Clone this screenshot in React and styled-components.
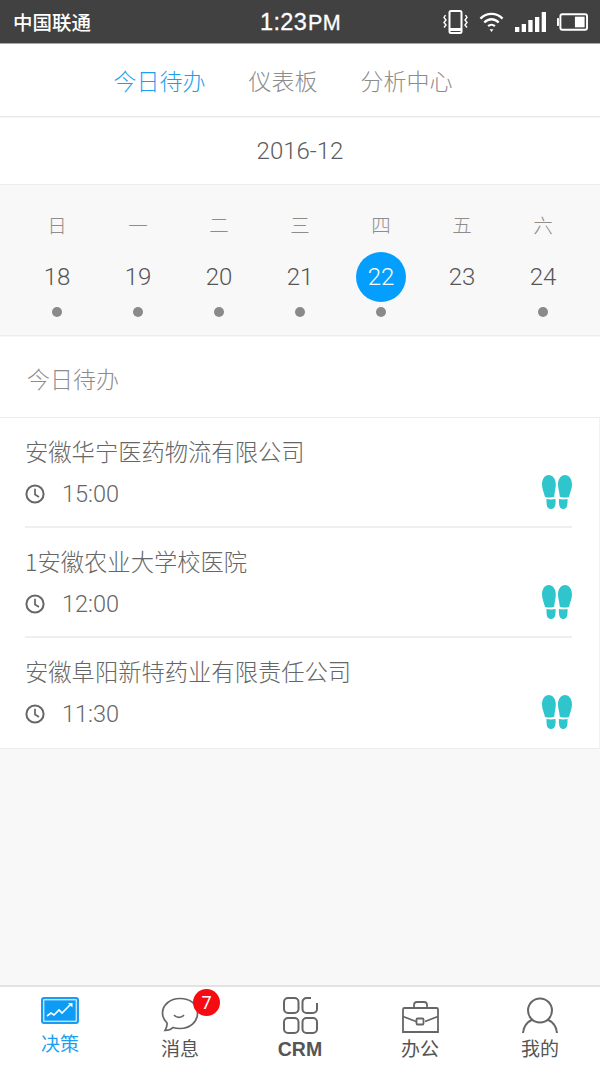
import React from "react";
import styled, { createGlobalStyle } from "styled-components";

const GlobalStyle = createGlobalStyle`
    html, body {
        margin: 0;
        padding: 0;
        background: #f8f8f8;
    }
    * {
        box-sizing: border-box;
    }
    body {
        font-family: "Roboto", "Noto Sans CJK SC", sans-serif;
    }
`;

const Page = styled.div`
    width: 600px;
    height: 1067px;
    display: flex;
    flex-direction: column;
    background: #f8f8f8;
    overflow: hidden;
`;

/* STATUS BAR */
const StatusBar = styled.div`
    height: 44px;
    flex: none;
    display: grid;
    grid-template-columns: 1fr auto 1fr;
    align-items: center;
    padding: 0 12px 0 13px;
    background: #414141;
    border-bottom: 1px solid #a8a8a8;
    color: #fff;
`;

const Carrier = styled.div`
    font-family: "Noto Sans CJK SC", sans-serif;
    font-size: 19.5px;
    font-weight: 500;
`;

const Clock = styled.div`
    font-family: "Liberation Sans", sans-serif;
    font-size: 23.5px;
    font-weight: 400;
    letter-spacing: 0.3px;
    padding-top: 2px;
    -webkit-text-stroke: 0.3px #fff;

    small {
        font-size: 21.5px;
        margin-left: 1px;
    }
`;

const StatusIcons = styled.div`
    display: flex;
    justify-content: flex-end;
    align-items: center;
    gap: 11px;
`;

/* TOP TABS */
const TopTabs = styled.div`
    height: 72px;
    flex: none;
    display: flex;
    justify-content: center;
    align-items: center;
    gap: 43px;
    padding-right: 34px;
    background: #fff;
    box-shadow: 0 1px 2px rgba(0, 0, 0, 0.1);
    position: relative;
`;

const TopTab = styled.div`
    font-family: "Noto Sans CJK SC", sans-serif;
    font-size: 23px;
    font-weight: 300;
    color: ${(p) => (p.$active ? "#1c9ff0" : "#8c8c8c")};
`;

const MonthRow = styled.div`
    height: 68px;
    margin-top: 1px;
    flex: none;
    display: flex;
    justify-content: center;
    align-items: center;
    background: #fff;
    border-bottom: 1px solid #ececec;
    font-size: 24px;
    font-weight: 300;
    color: #5c5c5c;
`;

/* CALENDAR */
const Calendar = styled.div`
    height: 151px;
    flex: none;
    display: grid;
    grid-template-columns: repeat(7, 81px);
    justify-content: center;
    background: #f8f8f8;
    border-bottom: 1px solid #ececec;
`;

const DayColumn = styled.div`
    display: flex;
    flex-direction: column;
    align-items: center;
`;

const WeekName = styled.div`
    height: 26px;
    margin-top: 27px;
    line-height: 26px;
    font-family: "Noto Sans CJK SC", sans-serif;
    font-size: 19.5px;
    font-weight: 300;
    color: #8d8d8d;
`;

const DayNumber = styled.div`
    width: 50px;
    height: 50px;
    margin-top: 14px;
    border-radius: 50%;
    display: flex;
    align-items: center;
    justify-content: center;
    font-size: 24px;
    font-weight: 300;
    background: ${(p) => (p.$selected ? "#049ffe" : "transparent")};
    color: ${(p) => (p.$selected ? "#fff" : "#555")};
`;

const Dot = styled.div`
    width: 10px;
    height: 10px;
    margin-top: 5px;
    border-radius: 50%;
    background: ${(p) => (p.$hidden ? "transparent" : "#8a8a8a")};
`;

/* TODO LIST */
const SectionTitle = styled.div`
    height: 81px;
    margin-top: 1px;
    flex: none;
    display: flex;
    align-items: center;
    padding: 2px 0 0 27px;
    background: #fff;
    border-bottom: 1px solid #ececec;
    font-family: "Noto Sans CJK SC", sans-serif;
    font-size: 23px;
    font-weight: 300;
    color: #8c8c8c;
`;

const TodoList = styled.div`
    flex: none;
    padding: 0 27px 0 25px;
    background: #fff;
    border-bottom: 1px solid #ececec;
    border-right: 1px solid #f2f2f2;
`;

const TodoRow = styled.div`
    height: 110px;
    display: flex;
    align-items: flex-end;
    justify-content: space-between;
    padding-bottom: 17px;
    border-bottom: 2px solid ${(p) => (p.$last ? "transparent" : "#efefef")};
`;

const TodoText = styled.div`
    display: flex;
    flex-direction: column;
    gap: 11px;
`;

const Company = styled.div`
    font-family: "Noto Sans CJK SC", sans-serif;
    font-size: 23.3px;
    line-height: 34px;
    font-weight: 300;
    color: #666;
`;

const TimeRow = styled.div`
    display: flex;
    align-items: center;
    gap: 17px;
    height: 30px;
    font-size: 23.5px;
    font-weight: 300;
    color: #666;
`;

/* BOTTOM TABS */
const BottomBar = styled.div`
    height: 82px;
    margin-top: auto;
    flex: none;
    display: grid;
    grid-template-columns: repeat(5, 120px);
    background: #fff;
    border-top: 2px solid #e2e2e2;
`;

const BottomItem = styled.div`
    position: relative;
    display: flex;
    flex-direction: column;
    align-items: center;
    padding-top: 10px;
    color: ${(p) => (p.$active ? "#1c9ff0" : "#555")};
`;

const IconSlot = styled.div`
    height: 38px;
    display: flex;
    align-items: ${(p) => (p.$low ? "flex-end" : "flex-start")};
    justify-content: center;
    padding-bottom: ${(p) => (p.$low ? "2px" : "0")};
`;

const BottomLabel = styled.div`
    font-family: ${(p) => (p.$latin ? '"Liberation Sans"' : '"Noto Sans CJK SC"')}, sans-serif;
    font-size: ${(p) => (p.$latin ? "19.5px" : "19px")};
    font-weight: ${(p) => (p.$latin ? 700 : 400)};
    line-height: 26px;
    margin-top: ${(p) => (p.$active ? "-5px" : p.$latin ? "1px" : "0")};
`;

const Badge = styled.div`
    position: absolute;
    top: 2px;
    left: 73px;
    width: 27px;
    height: 27px;
    border-radius: 50%;
    display: flex;
    align-items: center;
    justify-content: center;
    background: #f60b12;
    color: #fff;
    font-size: 18px;
    font-weight: 400;
`;

const VibrateIcon = () => (
    <svg width="25" height="24" viewBox="0 0 25 24" fill="none" stroke="#fff">
        <rect x="6.5" y="1" width="12" height="22" rx="1.5" strokeWidth="2" />
        <path d="M6.5 19.5h12" strokeWidth="3" />
        <path d="M2.5 5L1 7.5 3 10l-2 2.5L3 15l-2 2.5M22.5 5L24 7.5 22 10l2 2.5-2 2.5 2 2.5" strokeWidth="1.4" />
    </svg>
);

const WifiIcon = () => (
    <svg width="25" height="22" viewBox="0 0 26 22" fill="none" stroke="#fff" strokeWidth="2.4">
        <path d="M1.5 7.5C8 1 18 1 24.5 7.5" />
        <path d="M5.5 11.5C10 7 16 7 20.5 11.5" />
        <path d="M9.5 15.3C11.5 13.5 14.5 13.5 16.5 15.3" />
        <path d="M11 18.5h4l-2 3z" fill="#fff" stroke="none" />
    </svg>
);

const SignalIcon = () => (
    <svg width="31" height="20" viewBox="0 0 31 20" fill="#fff">
        <rect x="0" y="15" width="4.3" height="5" />
        <rect x="6.7" y="12" width="4.3" height="8" />
        <rect x="13.3" y="8" width="4.3" height="12" />
        <rect x="20" y="5" width="4.3" height="15" />
        <rect x="26.7" y="0" width="4.3" height="20" />
    </svg>
);

const BatteryIcon = () => (
    <svg width="31" height="18" viewBox="0 0 32 18" fill="none">
        <rect x="3.5" y="1" width="27.5" height="16" rx="2" stroke="#fff" strokeWidth="2" />
        <rect x="0" y="5" width="2" height="8" fill="#fff" />
        <rect x="18.5" y="3.5" width="10" height="11" fill="#fff" />
    </svg>
);

const ClockIcon = () => (
    <svg width="20" height="20" viewBox="0 0 20 20" fill="none" stroke="#666" strokeWidth="2">
        <circle cx="10" cy="10" r="8.6" />
        <path d="M10 4.8V10.5L14 13" strokeWidth="1.7" />
    </svg>
);

const StepsIcon = () => (
    <svg width="30" height="34" viewBox="0 0 30 34" fill="#2ec5cd">
        <path d="M6.8 0C2.8 0 0 4 0 9.5c0 4 1.8 7.5 3 12.5 3 .8 7 .8 9.2-.2.3-4.800 1.600-8.300 1.600-12.300C13.800 4 10.800 0 6.800 0z" />
        <path d="M4.500 24c2.800.6 6 .6 9 0 .2 2 .2 4-.2 6-.5 2.500-2 4-4.300 4-2.200 0-3.700-1.300-4.200-3.800-.3-2-.4-4-.3-6.200z" />
        <path d="M23 0c4 0 7 4 7 9.500 0 4-1.800 7.500-3 12.500-3 .8-7 .8-9.200-.2-.3-4.800-1.800-8.300-1.800-12.300C16 4 19 0 23 0z" />
        <path d="M25.500 24c-2.800.6-5.800.6-8.500 0-.2 2-.2 4 .2 6 .5 2.500 1.800 4 4 4s3.500-1.300 4-3.800c.4-2 .4-4 .3-6.200z" />
    </svg>
);

const ChartIcon = () => (
    <svg width="38" height="27" viewBox="0 0 38 27" fill="none">
        <rect x="1" y="1" width="36" height="25" rx="2" fill="#1d9bf0" stroke="#1d9bf0" strokeWidth="2" />
        <rect x="2.8" y="2.8" width="32.4" height="21.4" fill="#0e9bf5" stroke="#fff" strokeWidth="1" />
        <path d="M6 19l4-3 3 2 5-5 3 3 6-6 3-3" stroke="#fff" strokeWidth="1.6" />
        <path d="M27 6h4.500v4.500z" fill="#fff" />
    </svg>
);

const ChatIcon = () => (
    <svg width="38" height="35" viewBox="0 0 38 35" fill="none" stroke="#666" strokeWidth="1.7">
        <path d="M19 1.500C9 1.500 1.500 8 1.500 16c0 4.500 2 7.500 4.500 10 .3 2.500-.5 5-2 7.500 3.500 0 6-1 8-3 2.200.8 4.500 1 7 1 10 0 17.500-6.500 17.500-15.500S29 1.500 19 1.500z" />
        <path d="M13.500 18.500c2.500 2.500 6.500 2.500 9 0" strokeLinecap="round" />
    </svg>
);

const CrmIcon = () => (
    <svg width="35" height="37" viewBox="0 0 35 37" fill="none" stroke="#666" strokeWidth="2">
        <rect x="1" y="1" width="14.5" height="15" rx="4" />
        <path d="M28 1h-4.500a4 4 0 0 0-4 4v7a4 4 0 0 0 4 4H30a4 4 0 0 0 4-4V6" />
        <rect x="1" y="21" width="14.5" height="15" rx="4" />
        <rect x="19.5" y="21" width="14.5" height="15" rx="4" />
    </svg>
);

const BagIcon = () => (
    <svg width="37" height="32" viewBox="0 0 37 32" fill="none" stroke="#666" strokeWidth="1.8">
        <path d="M2.500 7h32a1.500 1.500 0 0 1 1.500 1.500V31H1V8.500A1.500 1.500 0 0 1 2.500 7z" />
        <path d="M12 7V4a3 3 0 0 1 3-3h7a3 3 0 0 1 3 3v3" />
        <path d="M1 15.500l13 5M36 15.500l-13 5" />
        <rect x="14.5" y="17.5" width="7" height="6" rx="1" />
    </svg>
);

const UserIcon = () => (
    <svg width="36" height="37" viewBox="0 0 36 37" fill="none" stroke="#666" strokeWidth="2">
        <circle cx="18" cy="13.5" r="12" />
        <path d="M1 36c.5-6 4-11 9.500-13.500M35 36c-.5-6-4-11-9.500-13.500" />
    </svg>
);

const weekDays = [
    { name: "日", day: 18 },
    { name: "一", day: 19 },
    { name: "二", day: 20 },
    { name: "三", day: 21 },
    { name: "四", day: 22, selected: true },
    { name: "五", day: 23, noDot: true },
    { name: "六", day: 24 },
];

const todos = [
    { company: "安徽华宁医药物流有限公司", time: "15:00" },
    { company: "1安徽农业大学校医院", time: "12:00" },
    { company: "安徽阜阳新特药业有限责任公司", time: "11:30" },
];

const App = () => {
    return (
        <Page>
            <GlobalStyle />

            <StatusBar>
                <Carrier>中国联通</Carrier>
                <Clock>
                    1:23<small>PM</small>
                </Clock>
                <StatusIcons>
                    <VibrateIcon />
                    <WifiIcon />
                    <SignalIcon />
                    <BatteryIcon />
                </StatusIcons>
            </StatusBar>

            <TopTabs>
                <TopTab $active>今日待办</TopTab>
                <TopTab>仪表板</TopTab>
                <TopTab>分析中心</TopTab>
            </TopTabs>

            <MonthRow>2016-12</MonthRow>

            <Calendar>
                {weekDays.map((d) => (
                    <DayColumn key={d.day}>
                        <WeekName>{d.name}</WeekName>
                        <DayNumber $selected={d.selected}>{d.day}</DayNumber>
                        <Dot $hidden={d.noDot} />
                    </DayColumn>
                ))}
            </Calendar>

            <SectionTitle>今日待办</SectionTitle>

            <TodoList>
                {todos.map((t, i) => (
                    <TodoRow key={t.time} $last={i === todos.length - 1}>
                        <TodoText>
                            <Company>{t.company}</Company>
                            <TimeRow>
                                <ClockIcon />
                                {t.time}
                            </TimeRow>
                        </TodoText>
                        <StepsIcon />
                    </TodoRow>
                ))}
            </TodoList>

            <BottomBar>
                <BottomItem $active>
                    <IconSlot>
                        <ChartIcon />
                    </IconSlot>
                    <BottomLabel $active>决策</BottomLabel>
                </BottomItem>
                <BottomItem>
                    <IconSlot>
                        <ChatIcon />
                    </IconSlot>
                    <BottomLabel>消息</BottomLabel>
                    <Badge>7</Badge>
                </BottomItem>
                <BottomItem>
                    <IconSlot>
                        <CrmIcon />
                    </IconSlot>
                    <BottomLabel $latin>CRM</BottomLabel>
                </BottomItem>
                <BottomItem>
                    <IconSlot $low>
                        <BagIcon />
                    </IconSlot>
                    <BottomLabel>办公</BottomLabel>
                </BottomItem>
                <BottomItem>
                    <IconSlot>
                        <UserIcon />
                    </IconSlot>
                    <BottomLabel>我的</BottomLabel>
                </BottomItem>
            </BottomBar>
        </Page>
    );
};

export default App;
